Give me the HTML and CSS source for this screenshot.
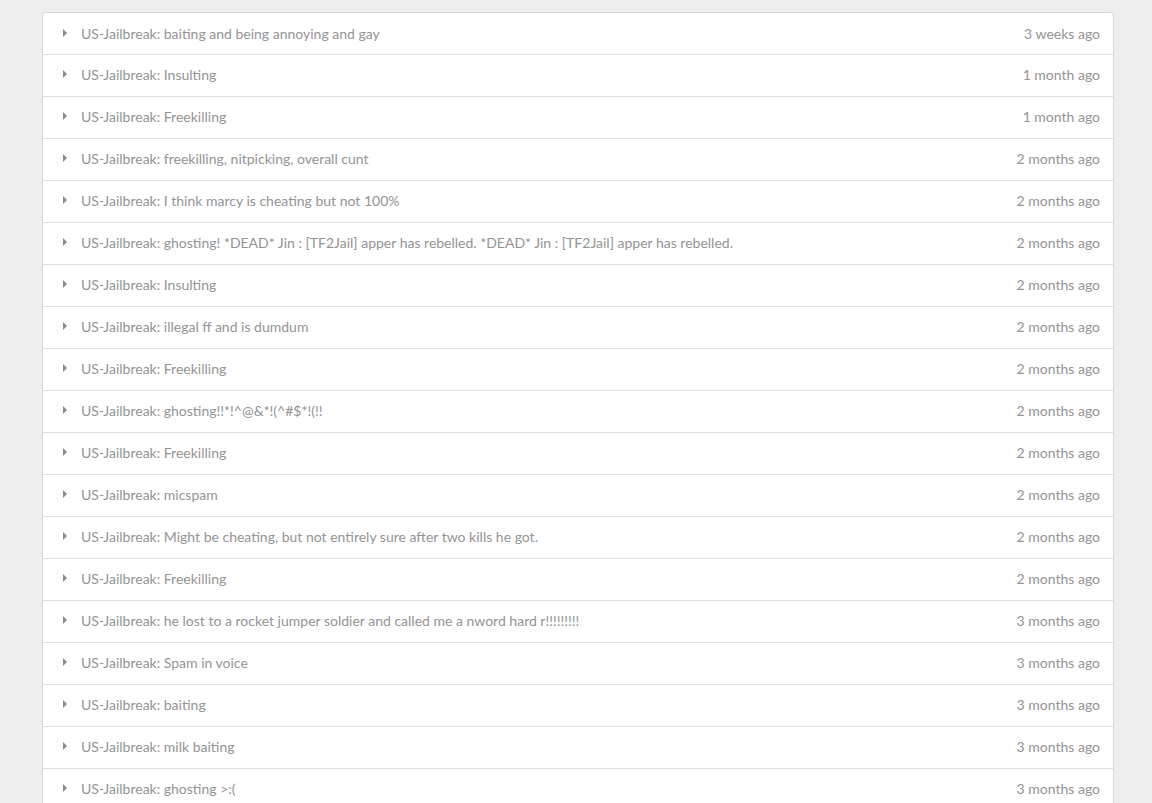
FILE: index.html
```html
<!DOCTYPE html>
<html>
<head>
<meta charset="utf-8">
<link rel="stylesheet" href="styles.css">
</head>
<body>
<div class="list">
  <div class="row"><span class="caret"></span><span class="title">US-Jailbreak: baiting and being annoying and gay</span><span class="time">3 weeks ago</span></div>
  <div class="row"><span class="caret"></span><span class="title">US-Jailbreak: Insulting</span><span class="time">1 month ago</span></div>
  <div class="row"><span class="caret"></span><span class="title">US-Jailbreak: Freekilling</span><span class="time">1 month ago</span></div>
  <div class="row"><span class="caret"></span><span class="title">US-Jailbreak: freekilling, nitpicking, overall cunt</span><span class="time">2 months ago</span></div>
  <div class="row"><span class="caret"></span><span class="title">US-Jailbreak: I think marcy is cheating but not 100%</span><span class="time">2 months ago</span></div>
  <div class="row"><span class="caret"></span><span class="title">US-Jailbreak: ghosting! *DEAD* Jin : [TF2Jail] apper has rebelled. *DEAD* Jin : [TF2Jail] apper has rebelled.</span><span class="time">2 months ago</span></div>
  <div class="row"><span class="caret"></span><span class="title">US-Jailbreak: Insulting</span><span class="time">2 months ago</span></div>
  <div class="row"><span class="caret"></span><span class="title">US-Jailbreak: illegal ff and is dumdum</span><span class="time">2 months ago</span></div>
  <div class="row"><span class="caret"></span><span class="title">US-Jailbreak: Freekilling</span><span class="time">2 months ago</span></div>
  <div class="row"><span class="caret"></span><span class="title">US-Jailbreak: ghosting!!*!^@&amp;*!(^#$*!(!!</span><span class="time">2 months ago</span></div>
  <div class="row"><span class="caret"></span><span class="title">US-Jailbreak: Freekilling</span><span class="time">2 months ago</span></div>
  <div class="row"><span class="caret"></span><span class="title">US-Jailbreak: micspam</span><span class="time">2 months ago</span></div>
  <div class="row"><span class="caret"></span><span class="title">US-Jailbreak: Might be cheating, but not entirely sure after two kills he got.</span><span class="time">2 months ago</span></div>
  <div class="row"><span class="caret"></span><span class="title">US-Jailbreak: Freekilling</span><span class="time">2 months ago</span></div>
  <div class="row"><span class="caret"></span><span class="title">US-Jailbreak: he lost to a rocket jumper soldier and called me a nword hard r!!!!!!!!!</span><span class="time">3 months ago</span></div>
  <div class="row"><span class="caret"></span><span class="title">US-Jailbreak: Spam in voice</span><span class="time">3 months ago</span></div>
  <div class="row"><span class="caret"></span><span class="title">US-Jailbreak: baiting</span><span class="time">3 months ago</span></div>
  <div class="row"><span class="caret"></span><span class="title">US-Jailbreak: milk baiting</span><span class="time">3 months ago</span></div>
  <div class="row"><span class="caret"></span><span class="title">US-Jailbreak: ghosting &gt;:(</span><span class="time">3 months ago</span></div>
</div>
</body>
</html>
```
FILE: styles.css
```css
html, body {
  margin: 0;
  padding: 0;
  background: #eeeeee;
  font-family: Lato, "Liberation Sans", sans-serif;
  overflow: hidden;
}
body {
  padding: 12px 0 0 42px;
}
.list {
  width: 1070px;
  background: #fff;
  border: 1px solid #d8d8d8;
  border-radius: 4px;
}
.row {
  display: flex;
  align-items: center;
  height: 41px;
  padding: 0 13px 0 20px;
  border-top: 1px solid #dedede;
  font-size: 14px;
  color: #949494;
}
.row + .row {
  height: 39px;
  padding-bottom: 2px;
}
.row:first-child {
  border-top: none;
}
.caret {
  width: 0;
  height: 0;
  border-top: 4px solid transparent;
  border-bottom: 4px solid transparent;
  border-left: 4px solid #8a8a8a;
  margin-right: 14px;
  margin-top: -2px;
}
.title {
  flex: 1;
}
.time {
  text-align: right;
}
```
